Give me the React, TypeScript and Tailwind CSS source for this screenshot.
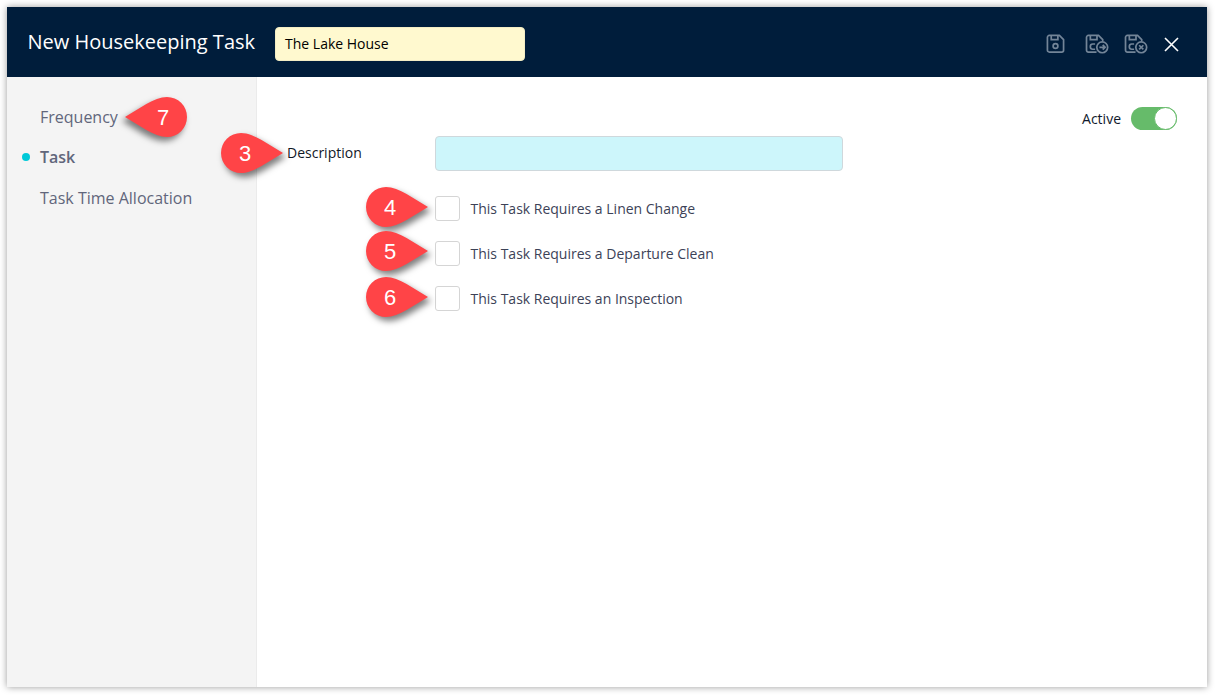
import React from 'react';

const font = { fontFamily: '"Open Sans", sans-serif' };

const SaveIcon = () => (
  <svg width="19" height="20" viewBox="0 0 20 21" fill="none" stroke="#738598" strokeWidth="1.800">
    <path d="M3.500 1.500h10.600l4.400 4.400v11.100a2 2 0 0 1-2 2h-13a2 2 0 0 1-2-2V3.500a2 2 0 0 1 2-2z" />
    <path d="M5.500 1.500v4.500h7V1.500" />
    <circle cx="10" cy="12.500" r="2.500" />
  </svg>
);

const SaveCloseIcon = ({ mark }: { mark: 'arrow' | 'x' }) => (
  <svg width="24" height="20" viewBox="0 0 25 21" fill="none" stroke="#738598" strokeWidth="1.800">
    <path d="M12 19H3.500a2 2 0 0 1-2-2V3.500a2 2 0 0 1 2-2h10.600l4.400 4.400V8" />
    <path d="M5.500 1.500v4.500h7V1.500" />
    <path d="M10.500 10.500H8a2.500 2.500 0 0 0-2.500 2.500v.5A2.500 2.500 0 0 0 8 16h2.500" />
    <circle cx="18" cy="14" r="5.700" />
    {mark === 'arrow' ? (
      <path d="M15 14h6M18.500 11.500L21 14l-2.500 2.500" />
    ) : (
      <path d="M15.800 11.800l4.400 4.400M20.200 11.800l-4.400 4.400" />
    )}
  </svg>
);

const Callout = ({
  n,
  flip,
  className,
}: {
  n: number;
  flip?: boolean;
  className: string;
}) => (
  <div className={`absolute h-[40px] w-[62px] ${className}`}>
    <svg
      width="62"
      height="40"
      viewBox="0 0 62 40"
      className={`overflow-visible drop-shadow-[3px_4px_3px_rgba(0,0,0,0.5)] ${flip ? '-scale-x-100' : ''}`}
    >
      <path d="M20 0C33 0 48 12 62 20C48 28 33 40 20 40A20 20 0 0 1 20 0Z" fill="#ff4447" />
    </svg>
    <span
      className={`absolute top-0 flex h-[40px] w-[48px] items-center justify-center text-[22px] text-white ${flip ? 'right-0' : 'left-0'}`}
      style={{ fontFamily: '"Liberation Sans", sans-serif' }}
    >
      {n}
    </span>
  </div>
);

const CheckRow = ({ label }: { label: string }) => (
  <div className="flex h-[25px] items-center">
    <div className="h-[25px] w-[25px] rounded-[3px] border border-[#d5d5d5] bg-white" />
    <span className="ml-[10.5px] text-[14px] text-[#3c4257]">{label}</span>
  </div>
);

export default function App() {
  return (
    <div className="min-h-[695px] bg-white p-[7px]" style={font}>
      <div className="relative flex h-[680px] w-[1200px] flex-col bg-white shadow-[0_0_7px_rgba(0,0,0,0.4)]">
        <header className="flex h-[70px] items-center bg-[#001d3b] pl-[20.5px] pr-[28px]">
          <h1 className="text-[20px] text-white">New Housekeeping Task</h1>
          <div className="ml-[20px] mt-[4px] flex h-[34px] w-[250px] items-center rounded-[4px] border border-[#f3edc4] bg-[#fff9cf] pb-[2px] pl-[9px] pr-[10px] text-[14px] text-black">
            The Lake House
          </div>
          <div className="ml-auto mt-[4px] flex items-center">
            <SaveIcon />
            <div className="ml-[19.5px] flex">
              <SaveCloseIcon mark="arrow" />
            </div>
            <div className="ml-[15px] flex">
              <SaveCloseIcon mark="x" />
            </div>
            <svg className="ml-[16.5px]" width="15" height="15" viewBox="0 0 15 15" stroke="#ffffff" strokeWidth="1.600">
              <path d="M1 1l13 13M14 1L1 14" />
            </svg>
          </div>
        </header>

        <div className="flex flex-1">
          <nav className="flex w-[250px] flex-col border-r border-[#ebebeb] bg-[#f4f4f4] pl-[33px] pt-[29px] text-[16px] leading-[22px] text-[#61667b]">
            <span>Frequency</span>
            <span className="relative mt-[18px] font-semibold">
              <span className="absolute left-[-18px] top-[7px] h-[8px] w-[8px] rounded-full bg-[#00c9d8]" />
              Task
            </span>
            <span className="mt-[19px]">Task Time Allocation</span>
          </nav>

          <main className="flex-1 pl-[30px] pr-[30px] pt-[30px]">
            <div className="flex h-[23px] items-center justify-end">
              <span className="mr-[10px] text-[14px] text-[#10182c]">Active</span>
              <div className="flex h-[23px] w-[46px] items-center justify-end rounded-full bg-[#66bb6a]">
                <div className="h-[23px] w-[23px] rounded-full border border-[#66bb6a] bg-white" />
              </div>
            </div>
            <div className="mt-[6px] flex items-center">
              <label className="mb-[2px] w-[148px] text-[14px] text-[#111827]">Description</label>
              <div className="h-[35px] w-[408px] rounded-[4px] border border-[#cfd8dc] bg-[#cdf6fb]" />
            </div>
            <div className="ml-[148px] mt-[25px] flex flex-col gap-[20px]">
              <CheckRow label="This Task Requires a Linen Change" />
              <CheckRow label="This Task Requires a Departure Clean" />
              <CheckRow label="This Task Requires an Inspection" />
            </div>
          </main>
        </div>

        <Callout n={7} flip className="left-[118px] top-[90px]" />
        <Callout n={3} className="left-[214px] top-[126px]" />
        <Callout n={4} className="left-[359px] top-[180px]" />
        <Callout n={5} className="left-[359px] top-[224px]" />
        <Callout n={6} className="left-[359px] top-[270px]" />
      </div>
    </div>
  );
}
